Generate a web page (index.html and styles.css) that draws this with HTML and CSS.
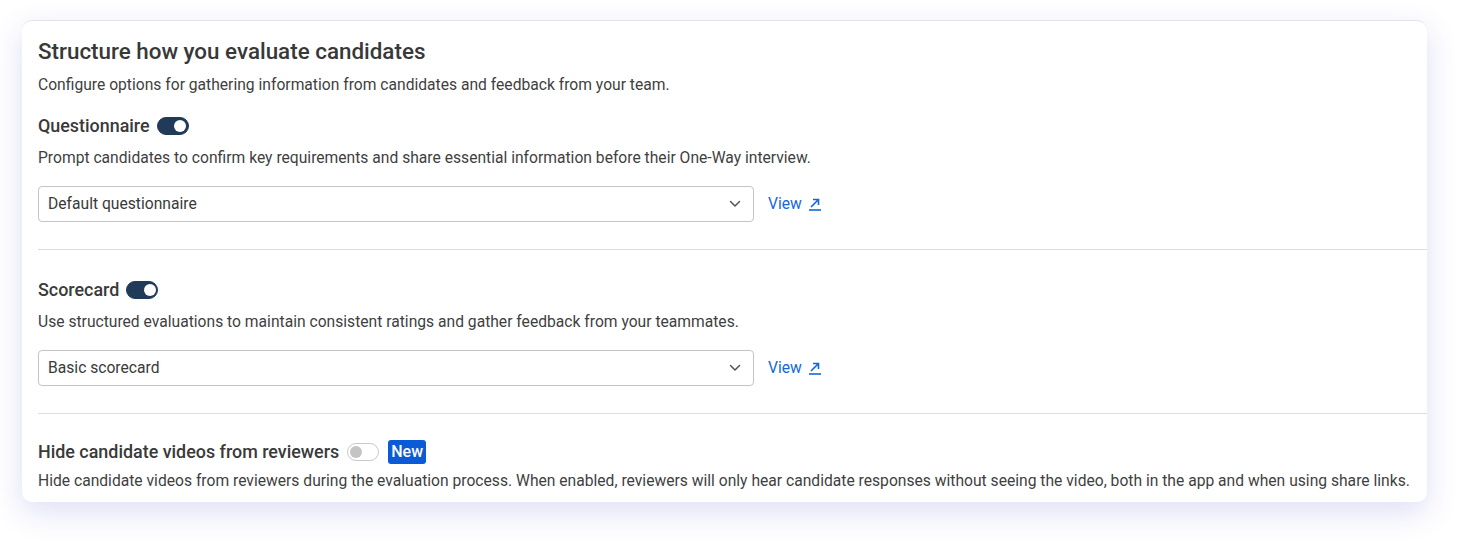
FILE: index.html
```html
<!DOCTYPE html>
<html lang="en">
<head>
    <meta charset="UTF-8">
    <meta name="viewport" content="width=device-width, initial-scale=1.0">
    <title>Evaluation settings</title>
    <link rel="stylesheet" href="styles.css">
</head>
<body>
    <div class="card">
        <h1>Structure how you evaluate candidates</h1>
        <p class="lead">Configure options for gathering information from candidates and feedback from your team.</p>

        <!-- Questionnaire -->
        <div class="section">
            <div class="section-head">
                <h2>Questionnaire</h2>
                <span class="toggle on"></span>
            </div>
            <p class="desc">Prompt candidates to confirm key requirements and share essential information before their One-Way interview.</p>
            <div class="select-row">
                <div class="select">
                    <span>Default questionnaire</span>
                    <svg class="chevron" width="12" height="8" viewBox="0 0 12 8"><path d="M1.5 1.5 6 6l4.5-4.5" fill="none" stroke="#4f5560" stroke-width="1.5" stroke-linecap="round" stroke-linejoin="round"/></svg>
                </div>
                <a class="view" href="#">View
                    <svg width="14" height="14" viewBox="0 0 14 14"><path d="M3 10 10.5 2.5M5 2.5h5.5V8" fill="none" stroke="currentColor" stroke-width="1.6"/><path d="M1 13h12" stroke="currentColor" stroke-width="1.6"/></svg>
                </a>
            </div>
        </div>

        <hr>

        <!-- Scorecard -->
        <div class="section">
            <div class="section-head">
                <h2>Scorecard</h2>
                <span class="toggle on"></span>
            </div>
            <p class="desc">Use structured evaluations to maintain consistent ratings and gather feedback from your teammates.</p>
            <div class="select-row">
                <div class="select">
                    <span>Basic scorecard</span>
                    <svg class="chevron" width="12" height="8" viewBox="0 0 12 8"><path d="M1.5 1.5 6 6l4.5-4.5" fill="none" stroke="#4f5560" stroke-width="1.5" stroke-linecap="round" stroke-linejoin="round"/></svg>
                </div>
                <a class="view" href="#">View
                    <svg width="14" height="14" viewBox="0 0 14 14"><path d="M3 10 10.5 2.5M5 2.5h5.5V8" fill="none" stroke="currentColor" stroke-width="1.6"/><path d="M1 13h12" stroke="currentColor" stroke-width="1.6"/></svg>
                </a>
            </div>
        </div>

        <hr>

        <!-- Hide videos -->
        <div class="section last">
            <div class="section-head">
                <h2>Hide candidate videos from reviewers</h2>
                <span class="toggle"></span>
                <span class="badge">New</span>
            </div>
            <p class="desc">Hide candidate videos from reviewers during the evaluation process. When enabled, reviewers will only hear candidate responses without seeing the video, both in the app and when using share links.</p>
        </div>
    </div>
</body>
</html>
```

FILE: styles.css
```css
body {
    margin: 0;
    padding: 20px 37px 40px 22px;
    background-color: #ffffff;
    font-family: Roboto, "Liberation Sans", Arial, sans-serif;
    color: #3a3a3a;
}
.card {
    background-color: white;
    border-top: 1px solid #e3e3ea;
    border-radius: 10px;
    padding: 16px 0 11px 16px;
    box-shadow: 0 10px 30px rgba(80, 80, 215, 0.19);
}
h1 {
    margin: 0;
    font-size: 22.4px;
    line-height: 28px;
    font-weight: 500;
    color: #383838;
}
.lead {
    margin: 10px 0 0;
    font-size: 15.65px;
    line-height: 20px;
    color: #3f3f3f;
}
.section {
    margin-top: 19px;
}
hr {
    border: none;
    border-top: 1px solid #dedede;
    margin: 27px 0 0;
}
hr + .section {
    margin-top: 28px;
}
hr + .section.last {
    margin-top: 26px;
}
.section-head {
    display: flex;
    align-items: center;
    gap: 7px;
    height: 24px;
}
h2 {
    margin: 0;
    font-size: 17.9px;
    line-height: 24px;
    font-weight: 500;
    color: #3a3a3a;
}
.toggle {
    position: relative;
    width: 32px;
    height: 18px;
    border-radius: 9px;
    box-sizing: border-box;
    background-color: #ffffff;
    border: 1.5px solid #c9c9c9;
}
.toggle::after {
    content: "";
    position: absolute;
    top: 1.5px;
    left: 1.5px;
    width: 12px;
    height: 12px;
    border-radius: 50%;
    background-color: #c4c4c4;
}
.toggle.on {
    background-color: #1f3b58;
    border-color: #1f3b58;
}
.toggle.on::after {
    left: auto;
    right: 1.5px;
    background-color: #ffffff;
}
.last .toggle {
    margin-left: 1px;
}
.badge {
    margin-left: 2px;
    background-color: #0b5ad6;
    color: white;
    font-size: 16px;
    font-weight: 500;
    line-height: 24px;
    padding: 0 3px;
    border-radius: 3px;
}
.desc {
    margin: 10px 0 0;
    font-size: 15.65px;
    line-height: 20px;
    color: #3f3f3f;
}
.last .desc {
    margin-top: 7px;
}
.select-row {
    display: flex;
    align-items: center;
    gap: 14px;
    margin-top: 18px;
}
.select {
    width: 716px;
    height: 36px;
    box-sizing: border-box;
    border: 1px solid #c4c4c4;
    border-radius: 4px;
    padding: 0 12px 1px 9px;
    display: flex;
    align-items: center;
    justify-content: space-between;
    font-size: 15.65px;
    color: #3a3a3a;
}
.view {
    display: flex;
    align-items: center;
    gap: 6px;
    padding-bottom: 1px;
    color: #1368d8;
    text-decoration: none;
    font-size: 15.65px;
}
```
